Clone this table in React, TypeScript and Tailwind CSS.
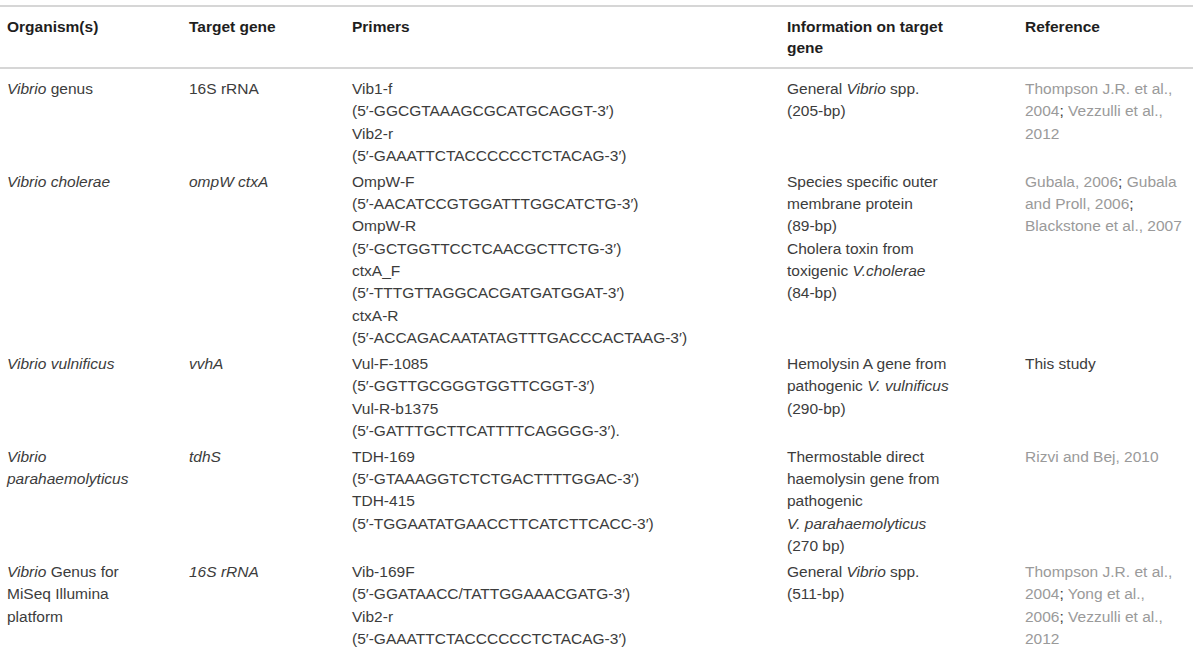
import type { ReactNode } from 'react'

type Row = {
  organism: ReactNode
  gene: ReactNode
  primers: string[]
  info: ReactNode
  refs: ReactNode
}

const Cite = ({ children }: { children: ReactNode }) => <span className="text-[#9a9a9a]">{children}</span>

const rows: Row[] = [
  {
    organism: (<><i>Vibrio</i> genus</>),
    gene: '16S rRNA',
    primers: ['Vib1-f', '(5′-GGCGTAAAGCGCATGCAGGT-3′)', 'Vib2-r', '(5′-GAAATTCTACCCCCCTCTACAG-3′)'],
    info: (<>General <i>Vibrio</i> spp.<br />(205-bp)</>),
    refs: (<><Cite>Thompson J.R. et al., 2004</Cite>; <Cite>Vezzulli et al., 2012</Cite></>),
  },
  {
    organism: <i>Vibrio cholerae</i>,
    gene: <i>ompW ctxA</i>,
    primers: [
      'OmpW-F',
      '(5′-AACATCCGTGGATTTGGCATCTG-3′)',
      'OmpW-R',
      '(5′-GCTGGTTCCTCAACGCTTCTG-3′)',
      'ctxA_F',
      '(5′-TTTGTTAGGCACGATGATGGAT-3′)',
      'ctxA-R',
      '(5′-ACCAGACAATATAGTTTGACCCACTAAG-3′)',
    ],
    info: (<>Species specific outer membrane protein<br />(89-bp)<br />Cholera toxin from toxigenic <i>V.cholerae</i><br />(84-bp)</>),
    refs: (<><Cite>Gubala, 2006</Cite>; <Cite>Gubala and Proll, 2006</Cite>; <Cite>Blackstone et al., 2007</Cite></>),
  },
  {
    organism: <i>Vibrio vulnificus</i>,
    gene: <i>vvhA</i>,
    primers: ['Vul-F-1085', '(5′-GGTTGCGGGTGGTTCGGT-3′)', 'Vul-R-b1375', '(5′-GATTTGCTTCATTTTCAGGGG-3′).'],
    info: (<>Hemolysin A gene from pathogenic <i>V. vulnificus</i><br />(290-bp)</>),
    refs: 'This study',
  },
  {
    organism: <i>Vibrio parahaemolyticus</i>,
    gene: <i>tdhS</i>,
    primers: ['TDH-169', '(5′-GTAAAGGTCTCTGACTTTTGGAC-3′)', 'TDH-415', '(5′-TGGAATATGAACCTTCATCTTCACC-3′)'],
    info: (<>Thermostable direct haemolysin gene from pathogenic <i className="whitespace-nowrap">V. parahaemolyticus</i><br />(270 bp)</>),
    refs: <Cite>Rizvi and Bej, 2010</Cite>,
  },
  {
    organism: (<><i>Vibrio</i> Genus for MiSeq Illumina platform</>),
    gene: <i>16S rRNA</i>,
    primers: ['Vib-169F', '(5′-GGATAACC/TATTGGAAACGATG-3′)', 'Vib2-r', '(5′-GAAATTCTACCCCCCTCTACAG-3′)'],
    info: (<>General <i>Vibrio</i> spp.<br />(511-bp)</>),
    refs: (<><Cite>Thompson J.R. et al., 2004</Cite>; <Cite>Yong et al., 2006</Cite>; <Cite>Vezzulli et al., 2012</Cite></>),
  },
]

export default function App() {
  return (
    <div className="w-[1200px] h-[655px] overflow-hidden bg-white pt-[5px] font-['Liberation_Sans',Arial,sans-serif] text-[15.5px] text-[#3c3c3c]">
      <table className="w-[1193px] table-fixed border-collapse border-t-2 border-[#d6d6d6]">
        <colgroup>
          <col className="w-[182px]" />
          <col className="w-[163px]" />
          <col className="w-[435px]" />
          <col className="w-[238px]" />
          <col className="w-[175px]" />
        </colgroup>
        <thead>
          <tr className="border-b-2 border-[#d6d6d6] text-left align-top font-bold leading-[21px] text-[#1e1e1e]">
            <th className="pl-[7px] pt-[9px] pb-[9px]">Organism(s)</th>
            <th className="pl-[7px] pt-[9px] pb-[9px]">Target gene</th>
            <th className="pl-[7px] pt-[9px] pb-[9px]">Primers</th>
            <th className="pl-[7px] pt-[9px] pb-[9px]"><div className="w-[178px]">Information on target gene</div></th>
            <th className="pl-[7px] pt-[9px] pb-[9px]">Reference</th>
          </tr>
        </thead>
        <tbody className="leading-[22.3px]">
          {rows.map((r, i) => {
            const pad = i === 0 ? 'pt-[9px]' : 'pt-[3.7px]'
            return (
              <tr key={i} className="align-top">
                <td className={`pl-[7px] ${pad}`}><div className="w-[150px]">{r.organism}</div></td>
                <td className={`pl-[7px] ${pad}`}>{r.gene}</td>
                <td className={`pl-[7px] ${pad}`}>
                  {r.primers.map((p, j) => (
                    <div key={j}>{p}</div>
                  ))}
                </td>
                <td className={`pl-[7px] ${pad}`}><div className="w-[178px]">{r.info}</div></td>
                <td className={`pl-[7px] ${pad}`}><div className="w-[160px]">{r.refs}</div></td>
              </tr>
            )
          })}
        </tbody>
      </table>
    </div>
  )
}
